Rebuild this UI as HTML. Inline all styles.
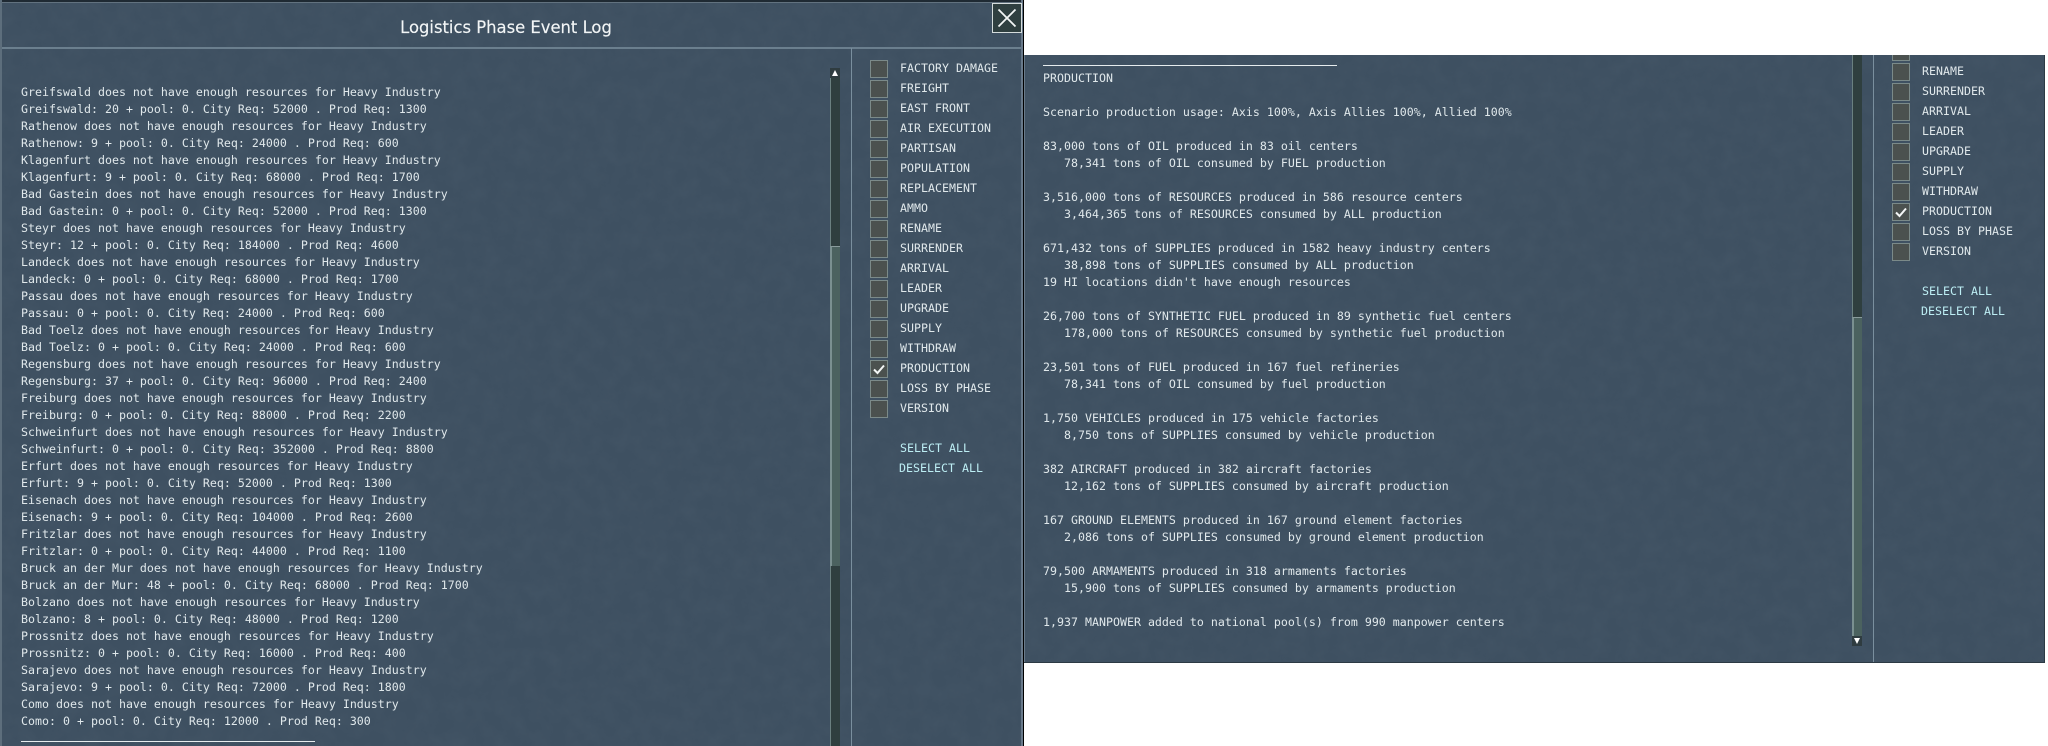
<!DOCTYPE html>
<html><head><meta charset="utf-8"><style>
html,body{margin:0;padding:0;background:#fff;width:2048px;height:746px;overflow:hidden}
*{box-sizing:border-box}
.a{position:absolute}
.panel{position:absolute;overflow:hidden;background:#3e5061}
.tex{position:absolute;left:0;top:0;opacity:.16}
pre,.lb{font-family:"DejaVu Sans Mono","Liberation Mono",monospace;font-size:11.6px;color:#e0e8eb;margin:0;letter-spacing:.016px}
pre{position:absolute;line-height:17px}
.lb{position:absolute;line-height:20px;height:20px;white-space:pre}
.cb{position:absolute;width:18px;height:18px;background:#4b514f;border:1px solid #7b8a89}
.cy{color:#bdeef4}
</style></head><body>

<div class="panel" style="left:0;top:0;width:1024px;height:746px;border-right:1px solid #000">
<svg class="tex" width="1024" height="746"><filter id="n"><feTurbulence type="fractalNoise" baseFrequency=".06" numOctaves="4" seed="3"/><feColorMatrix values="0 0 0 0 .15 0 0 0 0 .2 0 0 0 0 .25 0 0 0 .9 -.25"/></filter><rect width="1024" height="746" filter="url(#n)"/></svg>
<div class="a" style="left:0;top:0;width:1024px;height:2px;background:#1f2a33"></div>
<div class="a" style="left:0;top:2px;width:1023px;height:1px;background:#62727f"></div>
<div class="a" style="left:0;top:0;width:2px;height:746px;background:#5d6e7c"></div>
<div class="a" style="left:2px;top:47px;width:1020px;height:2px;background:#6b7f8e"></div>
<div class="a" style="left:1021px;top:0;width:2px;height:746px;background:#68798a"></div>
<div class="a" style="left:851px;top:48px;width:1px;height:698px;background:#7a8f9e"></div>
<div class="a" style="left:0;top:15px;width:1012px;text-align:center;font-family:'DejaVu Sans',sans-serif;font-size:16.4px;line-height:26px;color:#f2f5f6;-webkit-text-stroke:.15px #f2f5f6">Logistics Phase Event Log</div>
<div class="a" style="left:992px;top:3px;width:30px;height:30px;background:#2f3f40;border:1px solid #d5dcdc"><svg width="28" height="28" class="a" style="left:0;top:0"><path d="M5.5 5.5L22.5 22.5M22.5 5.5L5.5 22.5" stroke="#f2f5f5" stroke-width="1.8" fill="none"/></svg></div>

<pre style="left:21px;top:84px">Greifswald does not have enough resources for Heavy Industry
Greifswald: 20 + pool: 0. City Req: 52000 . Prod Req: 1300
Rathenow does not have enough resources for Heavy Industry
Rathenow: 9 + pool: 0. City Req: 24000 . Prod Req: 600
Klagenfurt does not have enough resources for Heavy Industry
Klagenfurt: 9 + pool: 0. City Req: 68000 . Prod Req: 1700
Bad Gastein does not have enough resources for Heavy Industry
Bad Gastein: 0 + pool: 0. City Req: 52000 . Prod Req: 1300
Steyr does not have enough resources for Heavy Industry
Steyr: 12 + pool: 0. City Req: 184000 . Prod Req: 4600
Landeck does not have enough resources for Heavy Industry
Landeck: 0 + pool: 0. City Req: 68000 . Prod Req: 1700
Passau does not have enough resources for Heavy Industry
Passau: 0 + pool: 0. City Req: 24000 . Prod Req: 600
Bad Toelz does not have enough resources for Heavy Industry
Bad Toelz: 0 + pool: 0. City Req: 24000 . Prod Req: 600
Regensburg does not have enough resources for Heavy Industry
Regensburg: 37 + pool: 0. City Req: 96000 . Prod Req: 2400
Freiburg does not have enough resources for Heavy Industry
Freiburg: 0 + pool: 0. City Req: 88000 . Prod Req: 2200
Schweinfurt does not have enough resources for Heavy Industry
Schweinfurt: 0 + pool: 0. City Req: 352000 . Prod Req: 8800
Erfurt does not have enough resources for Heavy Industry
Erfurt: 9 + pool: 0. City Req: 52000 . Prod Req: 1300
Eisenach does not have enough resources for Heavy Industry
Eisenach: 9 + pool: 0. City Req: 104000 . Prod Req: 2600
Fritzlar does not have enough resources for Heavy Industry
Fritzlar: 0 + pool: 0. City Req: 44000 . Prod Req: 1100
Bruck an der Mur does not have enough resources for Heavy Industry
Bruck an der Mur: 48 + pool: 0. City Req: 68000 . Prod Req: 1700
Bolzano does not have enough resources for Heavy Industry
Bolzano: 8 + pool: 0. City Req: 48000 . Prod Req: 1200
Prossnitz does not have enough resources for Heavy Industry
Prossnitz: 0 + pool: 0. City Req: 16000 . Prod Req: 400
Sarajevo does not have enough resources for Heavy Industry
Sarajevo: 9 + pool: 0. City Req: 72000 . Prod Req: 1800
Como does not have enough resources for Heavy Industry
Como: 0 + pool: 0. City Req: 12000 . Prod Req: 300</pre>
<div class="a" style="left:21px;top:741px;width:294px;height:1px;background:#e6ecee"></div>

<!-- scrollbar -->
<div class="a" style="left:830px;top:68px;width:10px;height:678px;background:#2f3f3f"></div>
<div class="a" style="left:830px;top:68px;width:1px;height:678px;background:#6a8080"></div>
<div class="a" style="left:830px;top:68px;width:10px;height:10px;background:#2f3c40"><div class="a" style="left:2px;top:2px;width:0;height:0;border-left:3px solid transparent;border-right:3px solid transparent;border-bottom:6px solid #fff"></div></div>
<div class="a" style="left:830px;top:246px;width:10px;height:320px;background:#4b625f;border-left:2px solid #7a9090;border-top:1px solid #8a9c9c"></div>

<!-- filters -->
<div class="cb" style="left:870px;top:60px"></div><div class="lb" style="left:900px;top:58px">FACTORY DAMAGE</div>
<div class="cb" style="left:870px;top:80px"></div><div class="lb" style="left:900px;top:78px">FREIGHT</div>
<div class="cb" style="left:870px;top:100px"></div><div class="lb" style="left:900px;top:98px">EAST FRONT</div>
<div class="cb" style="left:870px;top:120px"></div><div class="lb" style="left:900px;top:118px">AIR EXECUTION</div>
<div class="cb" style="left:870px;top:140px"></div><div class="lb" style="left:900px;top:138px">PARTISAN</div>
<div class="cb" style="left:870px;top:160px"></div><div class="lb" style="left:900px;top:158px">POPULATION</div>
<div class="cb" style="left:870px;top:180px"></div><div class="lb" style="left:900px;top:178px">REPLACEMENT</div>
<div class="cb" style="left:870px;top:200px"></div><div class="lb" style="left:900px;top:198px">AMMO</div>
<div class="cb" style="left:870px;top:220px"></div><div class="lb" style="left:900px;top:218px">RENAME</div>
<div class="cb" style="left:870px;top:240px"></div><div class="lb" style="left:900px;top:238px">SURRENDER</div>
<div class="cb" style="left:870px;top:260px"></div><div class="lb" style="left:900px;top:258px">ARRIVAL</div>
<div class="cb" style="left:870px;top:280px"></div><div class="lb" style="left:900px;top:278px">LEADER</div>
<div class="cb" style="left:870px;top:300px"></div><div class="lb" style="left:900px;top:298px">UPGRADE</div>
<div class="cb" style="left:870px;top:320px"></div><div class="lb" style="left:900px;top:318px">SUPPLY</div>
<div class="cb" style="left:870px;top:340px"></div><div class="lb" style="left:900px;top:338px">WITHDRAW</div>
<div class="cb" style="left:870px;top:360px"><svg width="16" height="16" class="a" style="left:0;top:0"><path d="M3 8.5L6.5 12L13 4.5" stroke="#f4f6f6" stroke-width="2" fill="none"/></svg></div><div class="lb" style="left:900px;top:358px">PRODUCTION</div>
<div class="cb" style="left:870px;top:380px"></div><div class="lb" style="left:900px;top:378px">LOSS BY PHASE</div>
<div class="cb" style="left:870px;top:400px"></div><div class="lb" style="left:900px;top:398px">VERSION</div>
<div class="lb cy" style="left:900px;top:438px">SELECT ALL</div>
<div class="lb cy" style="left:899px;top:458px">DESELECT ALL</div>
</div>

<div class="panel" style="left:1024px;top:55px;width:1021px;height:608px;border-bottom:1px solid #2c3a44;border-right:1px solid #2c3a44">
<svg class="tex" width="1021" height="608"><filter id="m"><feTurbulence type="fractalNoise" baseFrequency=".06" numOctaves="4" seed="8"/><feColorMatrix values="0 0 0 0 .15 0 0 0 0 .2 0 0 0 0 .25 0 0 0 .9 -.25"/></filter><rect width="1021" height="608" filter="url(#m)"/></svg>
<div class="a" style="left:0;top:0;width:1px;height:608px;background:#6a7b8a"></div>
<div class="a" style="left:19px;top:10px;width:294px;height:1px;background:#e6ecee"></div>
<pre style="left:19px;top:15px">PRODUCTION

Scenario production usage: Axis 100%, Axis Allies 100%, Allied 100%

83,000 tons of OIL produced in 83 oil centers
   78,341 tons of OIL consumed by FUEL production

3,516,000 tons of RESOURCES produced in 586 resource centers
   3,464,365 tons of RESOURCES consumed by ALL production

671,432 tons of SUPPLIES produced in 1582 heavy industry centers
   38,898 tons of SUPPLIES consumed by ALL production
19 HI locations didn't have enough resources

26,700 tons of SYNTHETIC FUEL produced in 89 synthetic fuel centers
   178,000 tons of RESOURCES consumed by synthetic fuel production

23,501 tons of FUEL produced in 167 fuel refineries
   78,341 tons of OIL consumed by fuel production

1,750 VEHICLES produced in 175 vehicle factories
   8,750 tons of SUPPLIES consumed by vehicle production

382 AIRCRAFT produced in 382 aircraft factories
   12,162 tons of SUPPLIES consumed by aircraft production

167 GROUND ELEMENTS produced in 167 ground element factories
   2,086 tons of SUPPLIES consumed by ground element production

79,500 ARMAMENTS produced in 318 armaments factories
   15,900 tons of SUPPLIES consumed by armaments production

1,937 MANPOWER added to national pool(s) from 990 manpower centers</pre>

<div class="a" style="left:828px;top:0;width:10px;height:591px;background:#2f3f3f"></div>
<div class="a" style="left:828px;top:0;width:1px;height:591px;background:#6a8080"></div>
<div class="a" style="left:828px;top:262px;width:10px;height:319px;background:#4b625f;border-left:2px solid #7a9090;border-top:1px solid #8a9c9c"></div>
<div class="a" style="left:828px;top:581px;width:10px;height:10px;background:#2f3c40"><div class="a" style="left:2px;top:2px;width:0;height:0;border-left:3px solid transparent;border-right:3px solid transparent;border-top:6px solid #fff"></div></div>
<div class="a" style="left:849px;top:0;width:1px;height:608px;background:#7a8f9e"></div>

<div class="cb" style="left:868px;top:-12px"></div>
<div class="cb" style="left:868px;top:8px"></div><div class="lb" style="left:898px;top:6px">RENAME</div>
<div class="cb" style="left:868px;top:28px"></div><div class="lb" style="left:898px;top:26px">SURRENDER</div>
<div class="cb" style="left:868px;top:48px"></div><div class="lb" style="left:898px;top:46px">ARRIVAL</div>
<div class="cb" style="left:868px;top:68px"></div><div class="lb" style="left:898px;top:66px">LEADER</div>
<div class="cb" style="left:868px;top:88px"></div><div class="lb" style="left:898px;top:86px">UPGRADE</div>
<div class="cb" style="left:868px;top:108px"></div><div class="lb" style="left:898px;top:106px">SUPPLY</div>
<div class="cb" style="left:868px;top:128px"></div><div class="lb" style="left:898px;top:126px">WITHDRAW</div>
<div class="cb" style="left:868px;top:148px"><svg width="16" height="16" class="a" style="left:0;top:0"><path d="M3 8.5L6.5 12L13 4.5" stroke="#f4f6f6" stroke-width="2" fill="none"/></svg></div><div class="lb" style="left:898px;top:146px">PRODUCTION</div>
<div class="cb" style="left:868px;top:168px"></div><div class="lb" style="left:898px;top:166px">LOSS BY PHASE</div>
<div class="cb" style="left:868px;top:188px"></div><div class="lb" style="left:898px;top:186px">VERSION</div>
<div class="lb cy" style="left:898px;top:226px">SELECT ALL</div>
<div class="lb cy" style="left:897px;top:246px">DESELECT ALL</div>
</div>
</body></html>
